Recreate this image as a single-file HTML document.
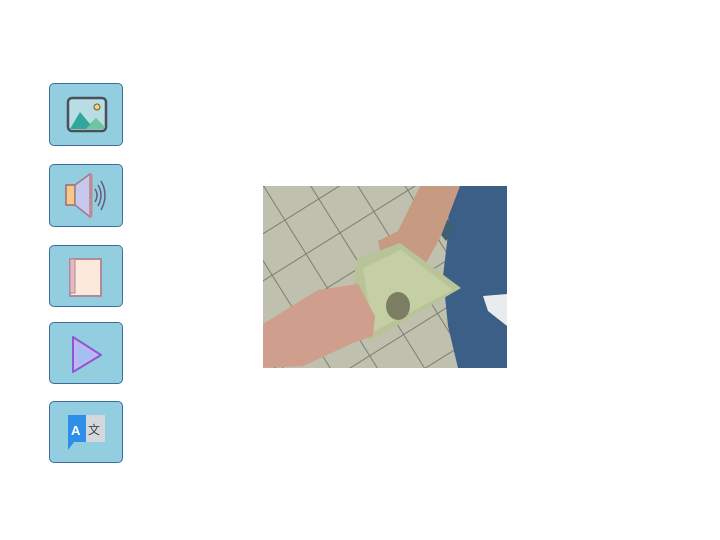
<!DOCTYPE html>
<html><head><style>
body{margin:0;width:720px;height:540px;background:#fff;position:relative;overflow:hidden;font-family:"Liberation Sans",sans-serif}
.b{position:absolute;left:49px;width:74px;height:62px;background:#93cde0;border:1px solid #3d6e9a;border-radius:5px;box-sizing:border-box}
.b svg{position:absolute;left:0;top:0}
</style></head><body>
<div class="b" style="top:83px;height:63px"><svg width="72" height="63">
<rect x="18" y="14" width="38" height="33" rx="4" fill="#b8dde4" stroke="#4a4f5a" stroke-width="2.5"/>
<path d="M20 45 L30 28 L40 40 L46 34 L54 45 Z" fill="#2fa79a"/>
<path d="M36 45 L46 34 L54 42 L54 45 Z" fill="#6cc6a0"/>
<circle cx="47" cy="23" r="3" fill="#f7d46a" stroke="#6a5a3a"/>
</svg></div>
<div class="b" style="top:164px;height:63px"><svg width="72" height="63">
<rect x="16" y="20" width="9" height="20" fill="#f7c986" stroke="#a06a6a" stroke-width="1.5"/>
<path d="M25 20 L40 9 L40 52 L25 40 Z" fill="#c6c8ec" stroke="#a07a8a" stroke-width="1.5"/>
<line x1="41" y1="9" x2="41" y2="52" stroke="#c08a8a" stroke-width="3"/>
<path d="M45 24 Q49 30 45 37 M48 20 Q54 30 48 41 M51 16 Q59 30 51 45" fill="none" stroke="#6a5a7a" stroke-width="1.5"/>
</svg></div>
<div class="b" style="top:245px;height:62px"><svg width="72" height="62">
<rect x="20" y="13" width="31" height="37" fill="#fbe9dc" stroke="#b08a98" stroke-width="2"/>
<rect x="20" y="13" width="5" height="34" fill="#e8b8c0" stroke="#b08a98"/>
</svg></div>
<div class="b" style="top:322px;height:62px"><svg width="72" height="62">
<path d="M23 14 L51 32 L23 49 Z" fill="#c2b4f4" stroke="#8a5ad0" stroke-width="2" stroke-linejoin="round"/>
<path d="M28 22 L44 32 L28 42 Z" fill="#9fc0f0"/>
</svg></div>
<div class="b" style="top:401px;height:62px"><svg width="72" height="62">
<path d="M18 13 L36 13 L36 40 L24 40 L18 48 Z" fill="#2f8fe8"/>
<rect x="36" y="13" width="19" height="27" fill="#d4d8dc"/>
<text x="21" y="33" font-size="13" font-weight="bold" fill="#fff" font-family="Liberation Sans,sans-serif">A</text>
<text x="38" y="32" font-size="12" fill="#444" font-family="Noto Sans CJK SC,sans-serif">文</text>
</svg></div>
<svg style="position:absolute;left:263px;top:186px" width="244" height="182" viewBox="0 0 244 182">
<defs>
<pattern id="t" width="40" height="40" patternUnits="userSpaceOnUse" patternTransform="rotate(-32)">
<rect width="40" height="40" fill="#bfc0ae"/><path d="M0 0H40M0 0V40" stroke="#7d7e70" stroke-width="2"/></pattern>
</defs>
<rect width="244" height="182" fill="url(#t)"/>
<path d="M182 0 L244 0 L244 182 L195 182 L185 140 L180 90 L186 40 Z" fill="#3b5f86"/>
<path d="M176 30 Q185 28 190 45 L183 55 L175 45 Z" fill="#3f6072"/>
<path d="M220 110 L244 108 L244 140 L225 125 Z" fill="#e8ecef"/>
<path d="M157 0 L197 0 L178 50 L158 86 L146 88 L140 78 L118 68 L115 55 L135 45 Z" fill="#c79a82"/>
<path d="M94 73 L137 57 L198 102 L107 155 L86 123 Z" fill="#b8c498"/>
<path d="M100 82 L138 64 L190 104 L110 146 Z" fill="#c8d2a8" opacity=".8"/>
<ellipse cx="135" cy="120" rx="12" ry="14" fill="#7b7e62"/>
<path d="M0 138 L55 104 L95 98 L112 130 L110 150 L90 157 L40 180 L0 182 Z" fill="#cf9e8c"/>
</svg>
</body></html>
